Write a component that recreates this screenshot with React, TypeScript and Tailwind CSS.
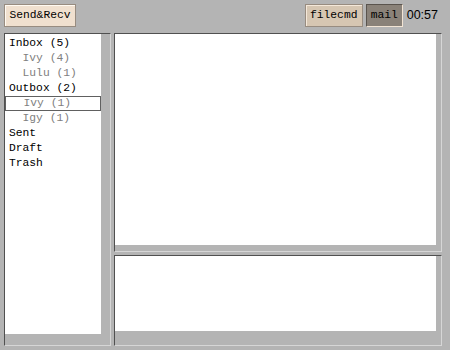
import React from "react";

const folders = [
  { label: "Inbox (5)", child: false },
  { label: "Ivy (4)", child: true },
  { label: "Lulu (1)", child: true },
  { label: "Outbox (2)", child: false },
  { label: "Ivy (1)", child: true, selected: true },
  { label: "Igy (1)", child: true },
  { label: "Sent", child: false },
  { label: "Draft", child: false },
  { label: "Trash", child: false },
];

function Panel({ className, gutterR, gutterB, children }: { className: string; gutterR: string; gutterB: string; children?: React.ReactNode }) {
  return (
    <div className={`flex flex-col border-t border-l border-t-[#505050] border-l-[#505050] border-r border-b border-r-[#d6d6d6] border-b-[#d6d6d6] ${className}`}>
      <div className="flex flex-1 min-h-0">
        <div className="flex-1 bg-white overflow-hidden">{children}</div>
        <div className={gutterR} />
      </div>
      <div className={gutterB} />
    </div>
  );
}

export default function App() {
  return (
    <div className="w-[450px] h-[350px] bg-[#b4b4b4] flex flex-col font-['Liberation_Mono',monospace] text-[11.3px] text-black overflow-hidden">
      <div className="h-[33px] flex items-start pt-[4px] pl-[4px] pr-[12px]">
        <button className="h-[23px] w-[72px] bg-[#f0e0cf] border border-[#988c80] shadow-[inset_1px_1px_0_#fffaf2] flex items-center justify-center leading-none">
          Send&amp;Recv
        </button>
        <div className="ml-auto flex items-center h-[23px]">
          <button className="h-[23px] w-[58px] bg-[#d6c6b2] border border-[#988c80] shadow-[inset_1px_1px_0_#f4e8da] flex items-center justify-center leading-none">
            filecmd
          </button>
          <button className="ml-[3px] h-[23px] w-[37px] bg-[#8a8279] border border-t-[#5a544e] border-l-[#5a544e] border-r-[#f2e4d4] border-b-[#f2e4d4] flex items-center justify-center leading-none">
            mail
          </button>
          <span className="ml-[4px] font-['Liberation_Sans',sans-serif] text-[12.5px] leading-none">00:57</span>
        </div>
      </div>
      <div className="flex pl-[4px] gap-[3px]">
        <Panel className="w-[107px] h-[313px]" gutterR="w-[9px]" gutterB="h-[11px]">
          <div className="pt-[2px]">
            {folders.map((f, i) => (
              <div
                key={i}
                className={`h-[15px] flex items-center pl-[4px] whitespace-pre ${f.child ? "text-[#808080]" : "text-black"} ${f.selected ? "border border-[#606060] pl-[3px]" : ""}`}
              >
                {f.child ? "  " + f.label : f.label}
              </div>
            ))}
          </div>
        </Panel>
        <div className="flex flex-col gap-[3px]">
          <Panel className="w-[328px] h-[219px]" gutterR="w-[5px]" gutterB="h-[6px]" />
          <Panel className="w-[328px] h-[91px]" gutterR="w-[5px]" gutterB="h-[14px]" />
        </div>
      </div>
    </div>
  );
}
